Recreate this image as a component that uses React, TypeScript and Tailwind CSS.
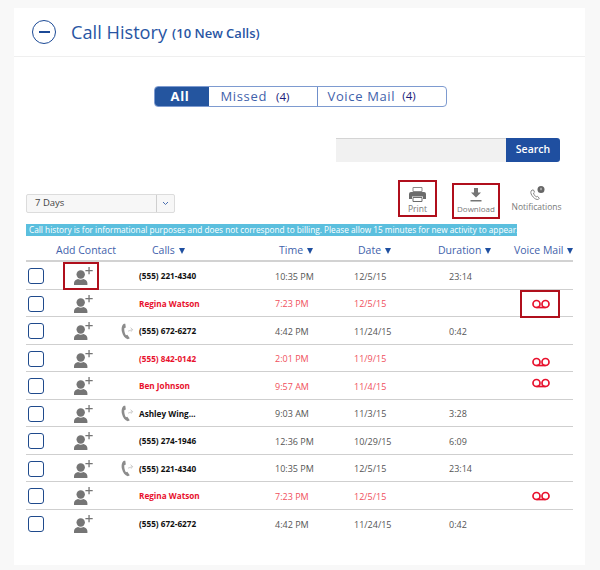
import React from "react";

const rows = [
  { name: "(555) 221-4340", time: "10:35 PM", date: "12/5/15", dur: "23:14", contactBox: true },
  { name: "Regina Watson", time: "7:23 PM", date: "12/5/15", dur: "", missed: true, vm: true, vmBox: true },
  { name: "(555) 672-6272", time: "4:42 PM", date: "11/24/15", dur: "0:42", phone: true },
  { name: "(555) 842-0142", time: "2:01 PM", date: "11/9/15", dur: "", missed: true, vm: true, vmClass: "mt-[6px]" },
  { name: "Ben Johnson", time: "9:57 AM", date: "11/4/15", dur: "", missed: true, vm: true, vmClass: "mb-[6px]" },
  { name: "Ashley Wing...", time: "9:03 AM", date: "11/3/15", dur: "3:28", phone: true },
  { name: "(555) 274-1946", time: "12:36 PM", date: "10/29/15", dur: "6:09" },
  { name: "(555) 221-4340", time: "10:35 PM", date: "12/5/15", dur: "23:14", phone: true },
  { name: "Regina Watson", time: "7:23 PM", date: "12/5/15", dur: "", missed: true, vm: true },
  { name: "(555) 672-6272", time: "4:42 PM", date: "11/24/15", dur: "0:42" },
];

function PersonPlus() {
  return (
    <svg width="19" height="18" viewBox="0 0 19 18" className="text-[#757575]" fill="currentColor">
      <circle cx="6.700" cy="7.500" r="4.200" />
      <path d="M0 18v-2c0-2.400 2.400-3.600 4-4 1.600.9 3.800.9 5.400 0 1.600.4 4 1.600 4 4v2z" />
      <path d="M14.400 0h1.300v2.900h3v1.300h-3v3h-1.300v-3h-3V2.900h3z" />
    </svg>
  );
}

function PhoneOut() {
  return (
    <svg width="13" height="17" viewBox="0 0 13 17" fill="none">
      <path d="M3 .8C.8 2 .2 5.500 1 9c.8 3.500 3 6.500 5.800 7.200l2-1-2.500-3.500-1.400.5C3.800 10.500 3 7.500 3.300 5.200l1.500-.8L4.300.8z" fill="#8c8c8c" />
      <path d="M7 8.200l4.500-1.700M9.500 4.700l2.100 1.800-1.500 2.200" stroke="#c0c0c0" strokeWidth=".8" />
    </svg>
  );
}

function VoicemailIcon({ className }: { className?: string }) {
  return (
    <svg width="18" height="10" viewBox="0 0 18 10" fill="none" stroke="#e8112d" strokeWidth="1.700" className={className}>
      <circle cx="4.500" cy="5" r="3.500" />
      <circle cx="13.500" cy="5" r="3.500" />
      <path d="M4.500 8.500h9" />
    </svg>
  );
}

function SortHead({ label }: { label: string }) {
  return (
    <div className="flex items-center whitespace-nowrap text-[10.500px] text-[#3f62ab]">
      {label}
      <span className="ml-1 inline-block h-0 w-0 border-x-[3.500px] border-t-[6px] border-x-transparent border-t-[#1f4fa0]" />
    </div>
  );
}

export default function App() {
  return (
    <div className="h-[570px] w-[600px] overflow-hidden bg-[#f8f8f8] pl-[14px] pt-2 font-['Open_Sans',sans-serif]">
      <div className="flex h-[49px] w-[571px] items-center border-b border-[#efefef] bg-white pl-[18px]">
        <div className="flex h-6 w-6 items-center justify-center rounded-full border-[1.500px] border-[#1c4a96]">
          <div className="h-[1.500px] w-[11px] bg-[#1c4a96]" />
        </div>
        <span className="ml-[15px] text-[18.200px] leading-none text-[#2855a3]">Call History</span>
        <span className="ml-[5px] mt-[3px] text-[13px] font-semibold leading-none text-[#2855a3]">(10 New Calls)</span>
      </div>

      <div className="h-[508px] w-[571px] bg-white px-3">
        <div className="flex justify-center pl-[1px] pt-[29px]">
          <div className="flex h-[21px] w-[293px] overflow-hidden rounded-[4px] border border-[#7e9bd0] text-[13px] tracking-[0.65px] text-[#3f62ab]">
            <div className="flex w-[54px] items-center justify-center bg-[#24559f] pr-[3px] font-bold text-white">All</div>
            <div className="flex w-[109px] items-center border-r border-[#6f8fca] pl-[12px]">
              Missed<span className="ml-[9px] text-[11.500px] tracking-normal text-[#1c1c7a]">(4)</span>
            </div>
            <div className="flex flex-1 items-center pl-[10px]">
              Voice Mail<span className="mb-[2px] ml-[7px] text-[11.500px] tracking-normal text-[#1c1c7a]">(4)</span>
            </div>
          </div>
        </div>

        <div className="mt-[31px] flex justify-end pr-[13px]">
          <div className="h-6 w-[170px] border-t border-[#d4d4d4] bg-[#f1f1f1]" />
          <div className="flex h-6 w-[54px] items-center justify-center rounded-r-[3px] bg-[#1f4fa0] text-[10.500px] font-semibold text-white">
            Search
          </div>
        </div>

        <div className="mt-[18px] flex h-[37px] items-start">
          <div className="mt-[14px] flex h-[19px] w-[149px] items-center rounded-[2px] border border-[#dcdcdc] bg-[#f7f7f7] text-[9.500px] text-[#444]">
            <span className="flex-1 pl-2">7 Days</span>
            <span className="flex h-full w-[18px] items-center justify-center border-l border-[#cfcfcf]">
              <svg width="7" height="5" viewBox="0 0 7 5" fill="none" stroke="#4a6fb0" strokeWidth="1">
                <path d="M1 1l2.500 2.500L6 1" />
              </svg>
            </span>
          </div>
          <div className="ml-auto flex items-start pr-3 text-[8.500px] text-[#7a7a7a]">
            <div className="flex h-[37px] w-[39px] flex-col items-center border-2 border-[#b00f1c] pt-[5px]">
              <svg width="17" height="15" viewBox="0 0 17 15" fill="#6b6b6b">
                <path d="M4 .5h9v4H4z" fill="none" stroke="#8a8a8a" />
                <path d="M2 5h13a2 2 0 0 1 2 2v5h-3V9.500H3V12H0V7a2 2 0 0 1 2-2z" />
                <path d="M4 10.500h9V14.500H4z" fill="none" stroke="#6b6b6b" />
              </svg>
              <span className="mt-[1px] leading-[11px]">Print</span>
            </div>
            <div className="ml-[15px] mt-[3px] flex h-[36px] w-[48px] flex-col items-center border-2 border-[#b00f1c] pt-[3px]">
              <svg width="12" height="14" viewBox="0 0 12 14" fill="#757575">
                <path d="M4 0h4v4.500h3L6 9.500 1 4.500h3z" />
                <path d="M.5 12h11v1.500H.5z" />
              </svg>
              <span className="mt-[1px] whitespace-nowrap text-[8px] leading-[11px]">Download</span>
            </div>
            <div className="ml-3 mt-[6px] flex w-[49px] flex-col items-center whitespace-nowrap">
              <svg width="15" height="15" viewBox="0 0 15 15" fill="none" className="ml-[1px]">
                <path d="M2 4C.4 5.200.5 7.500 2 9.500c1.500 2.200 3.300 3.800 5.200 4 1.200.1 2-.6 2-1.300L7.500 10.300l-1.300.5C5 10.200 3.800 8.500 3.500 7l1-.8L3.500 4z" stroke="#7a7a7a" strokeWidth=".9" />
                <circle cx="11" cy="3.500" r="3.500" fill="#666" />
                <path d="M11 1.800v2.400" stroke="#fff" strokeWidth=".8" />
              </svg>
              <span className="leading-[11px]">Notifications</span>
            </div>
          </div>
        </div>

        <div className="mt-[7px] h-3 w-[491px] whitespace-nowrap bg-[#5bbfde] pl-[3px] text-[8.250px] leading-3 text-white">
          Call history is for informational purposes and does not correspond to billing. Please allow 15 minutes for new activity to appear.
        </div>

        <div className="grid h-[26px] grid-cols-[30px_96px_127px_79px_80px_76px_59px] items-center border-b-2 border-[#d2d2d2] pt-[5px]">
          <div />
          <div className="whitespace-nowrap text-[10.500px] text-[#3f62ab]">Add Contact</div>
          <SortHead label="Calls" />
          <SortHead label="Time" />
          <SortHead label="Date" />
          <SortHead label="Duration" />
          <SortHead label="Voice Mail" />
        </div>

        {rows.map((r, i) => (
          <div
            key={i}
            className={`grid h-[27.500px] grid-cols-[30px_54px_29px_136px_79px_95px_65px_59px] items-center pt-[2px] text-[9px] ${
              i < rows.length - 1 ? "border-b border-[#cfcfcf]" : ""
            } ${r.missed ? "text-[#f0505c]" : "text-[#555]"}`}
          >
            <div className="ml-[2px] h-4 w-4 rounded-[3px] border-[1.500px] border-[#1f4a8c] bg-white" />
            <div className="relative flex h-full items-center justify-center">
              <PersonPlus />
              {r.contactBox && <div className="absolute -top-[2px] left-[7px] h-[28px] w-9 border-2 border-[#b00f1c]" />}
            </div>
            <div className="flex justify-end pr-[5px]">{r.phone && <PhoneOut />}</div>
            <div className={`whitespace-nowrap text-[8.200px] font-bold ${r.missed ? "text-[#e8112d]" : "text-[#111]"}`}>{r.name}</div>
            <div>{r.time}</div>
            <div>{r.date}</div>
            <div>{r.dur}</div>
            <div className="relative flex h-full items-center pl-[18px]">
              {r.vm && <VoicemailIcon className={r.vmClass} />}
              {r.vmBox && <div className="absolute -top-[2px] left-[6px] h-[28px] w-10 border-2 border-[#b00f1c]" />}
            </div>
          </div>
        ))}
      </div>
    </div>
  );
}
